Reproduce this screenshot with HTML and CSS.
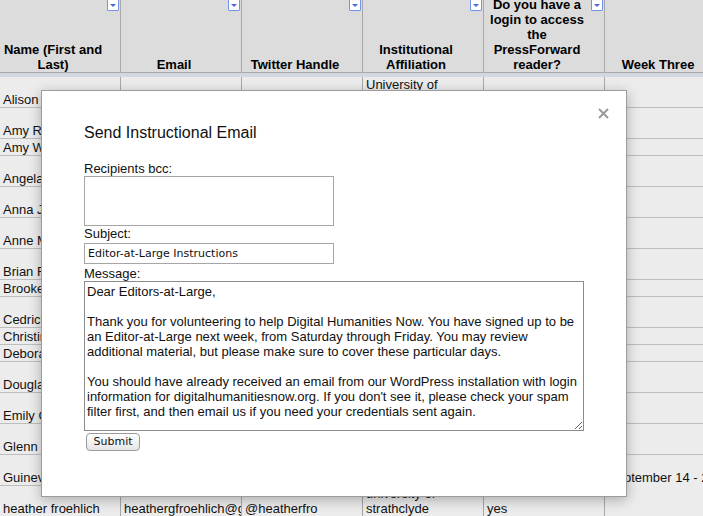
FILE: index.html
```html
<!DOCTYPE html>
<html>
<head>
<meta charset="utf-8">
<title>Send Instructional Email</title>
<link rel="stylesheet" href="styles.css">
</head>
<body>
<div class="sheet">
  <div class="row head">
    <div class="cell"><span>Name (First and Last)</span><i class="dd"><svg viewBox="0 0 10 10" width="10" height="10"><polygon points="2,4 8,4 5,7" fill="#4a6ad8"/></svg></i></div>
    <div class="cell"><span>Email</span><i class="dd"><svg viewBox="0 0 10 10" width="10" height="10"><polygon points="2,4 8,4 5,7" fill="#4a6ad8"/></svg></i></div>
    <div class="cell"><span>Twitter Handle</span><i class="dd"><svg viewBox="0 0 10 10" width="10" height="10"><polygon points="2,4 8,4 5,7" fill="#4a6ad8"/></svg></i></div>
    <div class="cell"><span>Institutional Affiliation</span><i class="dd"><svg viewBox="0 0 10 10" width="10" height="10"><polygon points="2,4 8,4 5,7" fill="#4a6ad8"/></svg></i></div>
    <div class="cell"><span>Do you have a login to access the PressForward reader?</span><i class="dd"><svg viewBox="0 0 10 10" width="10" height="10"><polygon points="2,4 8,4 5,7" fill="#4a6ad8"/></svg></i></div>
    <div class="cell"><span>Week Three</span></div>
  </div>
  <div class="band"></div>
  <div class="row r2"><div class="cell">Alison</div><div class="cell"></div><div class="cell"></div><div class="cell top">University of</div><div class="cell"></div><div class="cell"></div></div>
  <div class="row r2"><div class="cell">Amy R</div><div class="cell"></div><div class="cell"></div><div class="cell"></div><div class="cell"></div><div class="cell"></div></div>
  <div class="row r1"><div class="cell">Amy W</div><div class="cell"></div><div class="cell"></div><div class="cell"></div><div class="cell"></div><div class="cell"></div></div>
  <div class="row r2"><div class="cell">Angela</div><div class="cell"></div><div class="cell"></div><div class="cell"></div><div class="cell"></div><div class="cell"></div></div>
  <div class="row r2"><div class="cell">Anna J</div><div class="cell"></div><div class="cell"></div><div class="cell"></div><div class="cell"></div><div class="cell"></div></div>
  <div class="row r2"><div class="cell">Anne M</div><div class="cell"></div><div class="cell"></div><div class="cell"></div><div class="cell"></div><div class="cell"></div></div>
  <div class="row r2"><div class="cell">Brian F</div><div class="cell"></div><div class="cell"></div><div class="cell"></div><div class="cell"></div><div class="cell"></div></div>
  <div class="row r1"><div class="cell">Brooke</div><div class="cell"></div><div class="cell"></div><div class="cell"></div><div class="cell"></div><div class="cell"></div></div>
  <div class="row r2"><div class="cell">Cedrick</div><div class="cell"></div><div class="cell"></div><div class="cell"></div><div class="cell"></div><div class="cell"></div></div>
  <div class="row r1"><div class="cell">Christin</div><div class="cell"></div><div class="cell"></div><div class="cell"></div><div class="cell"></div><div class="cell"></div></div>
  <div class="row r1"><div class="cell">Deborah</div><div class="cell"></div><div class="cell"></div><div class="cell"></div><div class="cell"></div><div class="cell"></div></div>
  <div class="row r2"><div class="cell">Douglas</div><div class="cell"></div><div class="cell"></div><div class="cell"></div><div class="cell"></div><div class="cell"></div></div>
  <div class="row r2"><div class="cell">Emily C</div><div class="cell"></div><div class="cell"></div><div class="cell"></div><div class="cell"></div><div class="cell"></div></div>
  <div class="row r2"><div class="cell">Glenn</div><div class="cell"></div><div class="cell"></div><div class="cell"></div><div class="cell"></div><div class="cell"></div></div>
  <div class="row r2"><div class="cell">Guinevere</div><div class="cell"></div><div class="cell"></div><div class="cell"></div><div class="cell"></div><div class="cell nb">September 14 - 20</div></div>
  <div class="row r2"><div class="cell">heather froehlich</div><div class="cell">heathergfroehlich@gmail.com</div><div class="cell">@heatherfro</div><div class="cell">university of strathclyde</div><div class="cell">yes</div><div class="cell"></div></div>
</div>

<div class="modal">
  <svg class="close" viewBox="0 0 11 11" width="11" height="11"><path d="M1 1 L10 10 M10 1 L1 10" stroke="#9a9a9a" stroke-width="2"/></svg>
  <h2 class="title">Send Instructional Email</h2>
  <form class="form">
    <label class="lbl first" for="bcc">Recipients bcc:</label>
    <textarea id="bcc" class="bcc"></textarea>
    <label class="lbl" for="subj">Subject:</label>
    <input id="subj" class="subj" type="text" value="Editor-at-Large Instructions">
    <label class="lbl msg-lbl" for="msg">Message:</label>
    <textarea id="msg" class="msg">Dear Editors-at-Large,

Thank you for volunteering to help Digital Humanities Now. You have signed up to be
an Editor-at-Large next week, from Saturday through Friday. You may review
additional material, but please make sure to cover these particular days.

You should have already received an email from our WordPress installation with login
information for digitalhumanitiesnow.org. If you don't see it, please check your spam
filter first, and then email us if you need your credentials sent again.</textarea>
    <button type="button" class="submit">Submit</button>
  </form>
</div>
</body>
</html>
```

FILE: styles.css
```css
html, body {
  margin: 0;
  padding: 0;
  overflow: hidden;
  background: #ececec;
  font-family: "Liberation Sans", Arial, sans-serif;
  color: #111;
}

.sheet {
  width: 726px;
}

.row {
  display: grid;
  grid-template-columns: repeat(6, 121px);
}

.cell {
  box-sizing: border-box;
  border-right: 1px solid #a8a8a8;
  border-bottom: 1px solid #bdbdbd;
  padding: 0 3px;
  display: flex;
  flex-direction: column;
  justify-content: flex-end;
  overflow: hidden;
  font-size: 13px;
  line-height: 15px;
  white-space: normal;
}

.r2 .cell { height: 31px; }
.r1 .cell { height: 17px; }

.cell.top { justify-content: flex-start; }
.cell.nb { border-bottom-color: transparent; white-space: nowrap; }

.head .cell {
  position: relative;
  height: 73px;
  background: #dcdcdc;
  border-bottom: 1px solid #a9a9a9;
  padding: 0 14px 0 0;
  text-align: center;
  font-weight: bold;
  font-size: 13px;
  line-height: 15px;
  color: #000;
  overflow: visible;
}

.dd {
  position: absolute;
  right: 1px;
  top: -1px;
  width: 12px;
  height: 12px;
  box-sizing: border-box;
  border: 1px solid #7393ee;
  border-radius: 1px;
  background: #fff;
  display: flex;
  align-items: center;
  justify-content: center;
}

.band {
  height: 4px;
  background: #d3d7df;
}

.modal {
  position: absolute;
  left: 41px;
  top: 90px;
  width: 586px;
  height: 407px;
  box-sizing: border-box;
  border: 1px solid #9c9c9c;
  background: #fff;
  box-shadow: 0 3px 12px rgba(0, 0, 0, 0.28);
  padding: 33px 42px 0;
}

.close {
  position: absolute;
  left: 556px;
  top: 17px;
}

.title {
  margin: 0;
  font-size: 16px;
  line-height: 18px;
  font-weight: normal;
  color: #111;
}

.form {
  display: flex;
  flex-direction: column;
  align-items: flex-start;
  margin: 0;
}

.lbl {
  display: block;
  font-size: 13px;
  line-height: 15px;
  color: #111;
}

.lbl.first { margin-top: 19px; }
.msg-lbl { margin-top: 2px; }

.bcc {
  box-sizing: border-box;
  width: 250px;
  height: 50px;
  margin: 0;
  border: 1px solid #a6a6a6;
  resize: none;
  padding: 2px;
}

.subj {
  box-sizing: border-box;
  width: 250px;
  height: 21px;
  margin: 2px 0 0;
  border: 1px solid #a6a6a6;
  padding: 0 3px;
  font-family: "DejaVu Sans", sans-serif;
  font-size: 11px;
  color: #111;
  outline: none;
}

.msg {
  box-sizing: border-box;
  width: 500px;
  height: 150px;
  margin: 0;
  border: 1px solid #8c8c8c;
  padding: 2px 0 0 2px;
  font-family: "Liberation Sans", Arial, sans-serif;
  font-size: 13px;
  line-height: 15px;
  color: #111;
  overflow: hidden;
  outline: none;
}

.submit {
  box-sizing: border-box;
  width: 54px;
  height: 18px;
  margin: 2px 0 0 2px;
  padding: 0;
  border: 1px solid #9a9a9a;
  border-radius: 4px;
  background: linear-gradient(#ffffff, #e6e6e6);
  font-family: "DejaVu Sans", sans-serif;
  font-size: 11px;
  line-height: 16px;
  color: #111;
}
```
